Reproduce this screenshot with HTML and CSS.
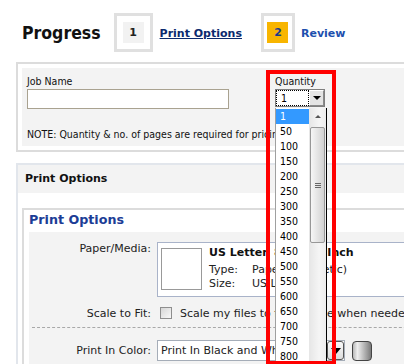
FILE: index.html
```html
<!DOCTYPE html>
<html lang="en">
<head>
<meta charset="utf-8">
<title>Progress - Print Options</title>
<link rel="stylesheet" href="styles.css">
</head>
<body>
<header class="progress">
  <h1 class="progress-title">Progress</h1>
  <div class="step"><span class="step-num">1</span></div>
  <a class="step-link step-link-done" href="#">Print Options</a>
  <div class="step step-current"><span class="step-num step-num-current">2</span></div>
  <a class="step-link step-link-current" href="#">Review</a>
</header>

<section class="panel job-panel">
  <div class="job-body">
    <div class="job-row">
      <div class="field job-field">
        <label class="field-label">Job Name</label>
        <div class="text-input"></div>
      </div>
      <div class="field qty-field">
        <label class="field-label">Quantity</label>
        <div class="qty-combo">
          <div class="qty-select">
            <span class="qty-value">1</span>
            <span class="qty-btn"><span class="tri-down"></span></span>
          </div>
          <div class="qty-list">
            <ul class="qty-options">
              <li class="qty-option is-selected">1</li>
              <li class="qty-option">50</li>
              <li class="qty-option">100</li>
              <li class="qty-option">150</li>
              <li class="qty-option">200</li>
              <li class="qty-option">250</li>
              <li class="qty-option">300</li>
              <li class="qty-option">350</li>
              <li class="qty-option">400</li>
              <li class="qty-option">450</li>
              <li class="qty-option">500</li>
              <li class="qty-option">550</li>
              <li class="qty-option">600</li>
              <li class="qty-option">650</li>
              <li class="qty-option">700</li>
              <li class="qty-option">750</li>
              <li class="qty-option">800</li>
            </ul>
            <div class="scrollbar">
              <div class="scroll-up"><span class="tri-up"></span></div>
              <div class="scroll-thumb"><span class="grip"></span></div>
            </div>
          </div>
        </div>
      </div>
    </div>
    <p class="note">NOTE: Quantity &amp; no. of pages are required for pricing.</p>
  </div>
</section>

<section class="panel options-panel">
  <h2 class="panel-title">Print Options</h2>
  <div class="options-body">
    <div class="options-box">
      <h3 class="options-heading">Print Options</h3>
      <div class="form">
        <div class="form-row">
          <span class="form-label">Paper/Media:</span>
          <div class="media-box">
            <div class="media-thumb"></div>
            <div class="media-info">
              <div class="media-name">US Letter, 8.5 x 11 Inch</div>
              <div class="media-specs">
                <span>Type:</span><span>Paper (Synthetic)</span>
                <span>Size:</span><span>US Letter</span>
              </div>
            </div>
          </div>
        </div>
        <div class="form-row row-scale">
          <span class="form-label">Scale to Fit:</span>
          <span class="checkbox"></span>
          <span class="check-text">Scale my files to fit on page when needed</span>
        </div>
        <hr class="divider">
        <div class="form-row row-color">
          <span class="form-label">Print In Color:</span>
          <div class="color-select">
            <span class="color-value">Print In Black and White</span>
            <span class="color-btn"><span class="tri-down"></span></span>
          </div>
          <span class="color-swatch"></span>
        </div>
      </div>
    </div>
  </div>
</section>

<div class="annotation"></div>
</body>
</html>
```

FILE: styles.css
```css
* { box-sizing: border-box; }
html, body { margin: 0; padding: 0; overflow: hidden; background: #fff; }
body {
  width: 404px;
  height: 364px;
  position: relative;
  font-family: "DejaVu Sans", Verdana, sans-serif;
  font-size: 11px;
  color: #222;
}

/* Progress header */
.progress {
  display: flex;
  align-items: center;
  height: 39px;
  margin: 13px 0 0 22px;
}
.progress-title {
  margin: 3px 13px 0 0;
  font-family: "DejaVu Sans Condensed", "DejaVu Sans", sans-serif;
  font-stretch: condensed;
  font-weight: bold;
  font-size: 17.5px;
  line-height: 1;
  color: #111;
}
.step {
  width: 39px;
  height: 39px;
  border: 3px solid #e0e0e0;
  display: flex;
  align-items: center;
  justify-content: center;
  flex: none;
}
.step-current { width: 34px; }
.step-num {
  width: 21px;
  height: 21px;
  background: #f2f2f2;
  font-weight: bold;
  font-size: 11px;
  color: #222;
  display: flex;
  align-items: center;
  justify-content: center;
}
.step-num-current { background: #f8b500; color: #1b3a8c; }
.step-link {
  font-weight: bold;
  font-size: 11px;
  margin: 1px 19px 0 7px;
  color: #0b2a6e;
}
.step-link-current { color: #1d4fae; text-decoration: none; margin-left: 6px; }

/* Panels */
.panel {
  margin-left: 16px;
  width: 420px;
}
.job-panel {
  margin-top: 10px;
  border: 2px solid #dcdcdc;
  padding: 4px;
}
.job-body {
  background: #f3f3f3;
  padding: 7px 0 5px 5px;
}
.field-label, .note, .qty-value, .qty-option {
  font-family: "DejaVu Sans Condensed", "DejaVu Sans", sans-serif;
  font-stretch: condensed;
}
.job-row { display: flex; }
.job-field { width: 248px; flex: none; }
.field-label {
  display: block;
  font-size: 10.5px;
  line-height: 13px;
  color: #111;
}
.text-input {
  margin-top: 1px;
  width: 202px;
  height: 20px;
  border: 1px solid #a9a290;
  background: #fff;
}
.qty-combo { position: relative; margin-top: 1px; }
.qty-select {
  width: 50px;
  height: 18px;
  border: 1px solid #7f7f7f;
  background: #fff;
  display: flex;
}
.qty-value {
  flex: 1;
  font-size: 10.5px;
  line-height: 16px;
  padding-left: 5px;
  outline: 1px dotted #000;
  outline-offset: -1px;
  color: #000;
}
.qty-btn {
  width: 15px;
  background: #e4e4e4;
  border: 1px solid;
  border-color: #fff #8a8a8a #8a8a8a #fff;
  display: flex;
  align-items: center;
  justify-content: center;
}
.tri-down {
  width: 0;
  height: 0;
  border-left: 4px solid transparent;
  border-right: 4px solid transparent;
  border-top: 4px solid #000;
}
.tri-up {
  width: 0;
  height: 0;
  border-left: 3px solid transparent;
  border-right: 3px solid transparent;
  border-bottom: 3px solid #555;
}
.qty-list {
  position: absolute;
  top: calc(100% + 1px);
  left: 0;
  width: 52px;
  height: 262px;
  background: #fff;
  border-left: 1px solid #a0a0a0;
  border-right: 1px solid #000;
  display: flex;
  z-index: 4;
}
.qty-options {
  list-style: none;
  margin: 0;
  padding: 1px 0 0 0;
  width: 33px;
  flex: none;
}
.qty-option {
  height: 15px;
  line-height: 15px;
  padding-left: 4px;
  font-size: 10.5px;
  color: #000;
}
.qty-option.is-selected { background: #3399ff; color: #fff; }
.scrollbar {
  position: relative;
  flex: 1;
  background: linear-gradient(to right, #e6e6e6, #f5f5f5 60%, #ececec);
}
.scroll-up {
  height: 17px;
  display: flex;
  align-items: center;
  justify-content: center;
}
.scroll-thumb {
  position: absolute;
  top: 19px;
  left: 1px;
  right: 1px;
  height: 116px;
  border: 1px solid #979797;
  border-radius: 2px;
  background: linear-gradient(to right, #f6f6f6, #e4e4e4 50%, #d2d2d2);
  display: flex;
  align-items: center;
  justify-content: center;
}
.grip {
  width: 6px;
  height: 5px;
  background: repeating-linear-gradient(to bottom, #666 0, #666 1px, transparent 1px, transparent 2px);
}
.note {
  margin: 19px 0 0;
  font-size: 10.5px;
  line-height: 13px;
  color: #111;
}

/* Print options panel */
.options-panel {
  margin-top: 11px;
  border: 2px solid #e2e6ec;
  border-bottom: 0;
}
.panel-title {
  margin: 0;
  height: 28px;
  line-height: 28px;
  padding-left: 7px;
  background: #f3f3f3;
  font-size: 11px;
  font-weight: bold;
  color: #111;
}
.options-body { padding: 15px 0 0 4px; }
.options-box {
  border: 2px solid #dcdcdc;
  padding-left: 5px;
}
.options-heading {
  margin: 0;
  height: 22px;
  line-height: 19px;
  font-size: 12.7px;
  font-weight: bold;
  color: #1c3d96;
}
.form {
  background: #f3f3f3;
  padding: 10px 0 30px;
}
.form-row { display: flex; align-items: flex-start; }
.form-label {
  width: 122px;
  flex: none;
  text-align: right;
  line-height: 13px;
  color: #222;
}
.media-box {
  margin-left: 6px;
  width: 260px;
  flex: none;
  display: flex;
  border: 1px solid #a9b3c9;
  background: #fff;
  padding: 5px 0 5px 3px;
}
.media-thumb {
  width: 41px;
  height: 42px;
  border: 1px solid #999;
  flex: none;
}
.media-info { margin: -2px 0 0 7px; line-height: 14px; }
.media-name { font-weight: bold; white-space: nowrap; color: #111; }
.media-specs {
  margin-top: 3px;
  display: grid;
  grid-template-columns: 43px auto;
  white-space: nowrap;
}
.row-scale { margin-top: 10px; }
.checkbox {
  margin-left: 9px;
  width: 12px;
  height: 12px;
  flex: none;
  border: 1px solid #8e8e8e;
  background: linear-gradient(135deg, #d6d6d6, #f8f8f8);
}
.check-text { margin-left: 8px; line-height: 13px; white-space: nowrap; }
.divider {
  margin: 7px 0 0 3px;
  border: 0;
  border-top: 1px dashed #a8a8a8;
  height: 0;
}
.row-color { margin-top: 12px; align-items: center; }
.color-select {
  margin-left: 6px;
  width: 188px;
  height: 21px;
  flex: none;
  border: 1px solid #a5adb8;
  background: #fff;
  display: flex;
  align-items: center;
}
.color-value { flex: 1; padding-left: 3px; white-space: nowrap; overflow: hidden; }
.color-btn {
  width: 17px;
  height: 19px;
  border: 1px solid #555;
  border-radius: 3px;
  background: linear-gradient(to bottom, #fafafa, #dcdcdc);
  display: flex;
  align-items: center;
  justify-content: center;
}
.color-btn .tri-down { border-left-width: 5px; border-right-width: 5px; border-top-width: 6px; }
.color-swatch {
  margin-left: 7px;
  width: 20px;
  height: 20px;
  flex: none;
  border: 1px solid #444;
  border-radius: 4px;
  background: linear-gradient(to right, #b8b8b8, #eeeeee 25%, #9a9a9a 80%, #7a7a7a);
}

/* Annotation overlay */
.annotation {
  position: absolute;
  left: 266px;
  top: 70px;
  width: 70px;
  height: 295px;
  border: 4px solid #ff0000;
  pointer-events: none;
  z-index: 5;
}
```
